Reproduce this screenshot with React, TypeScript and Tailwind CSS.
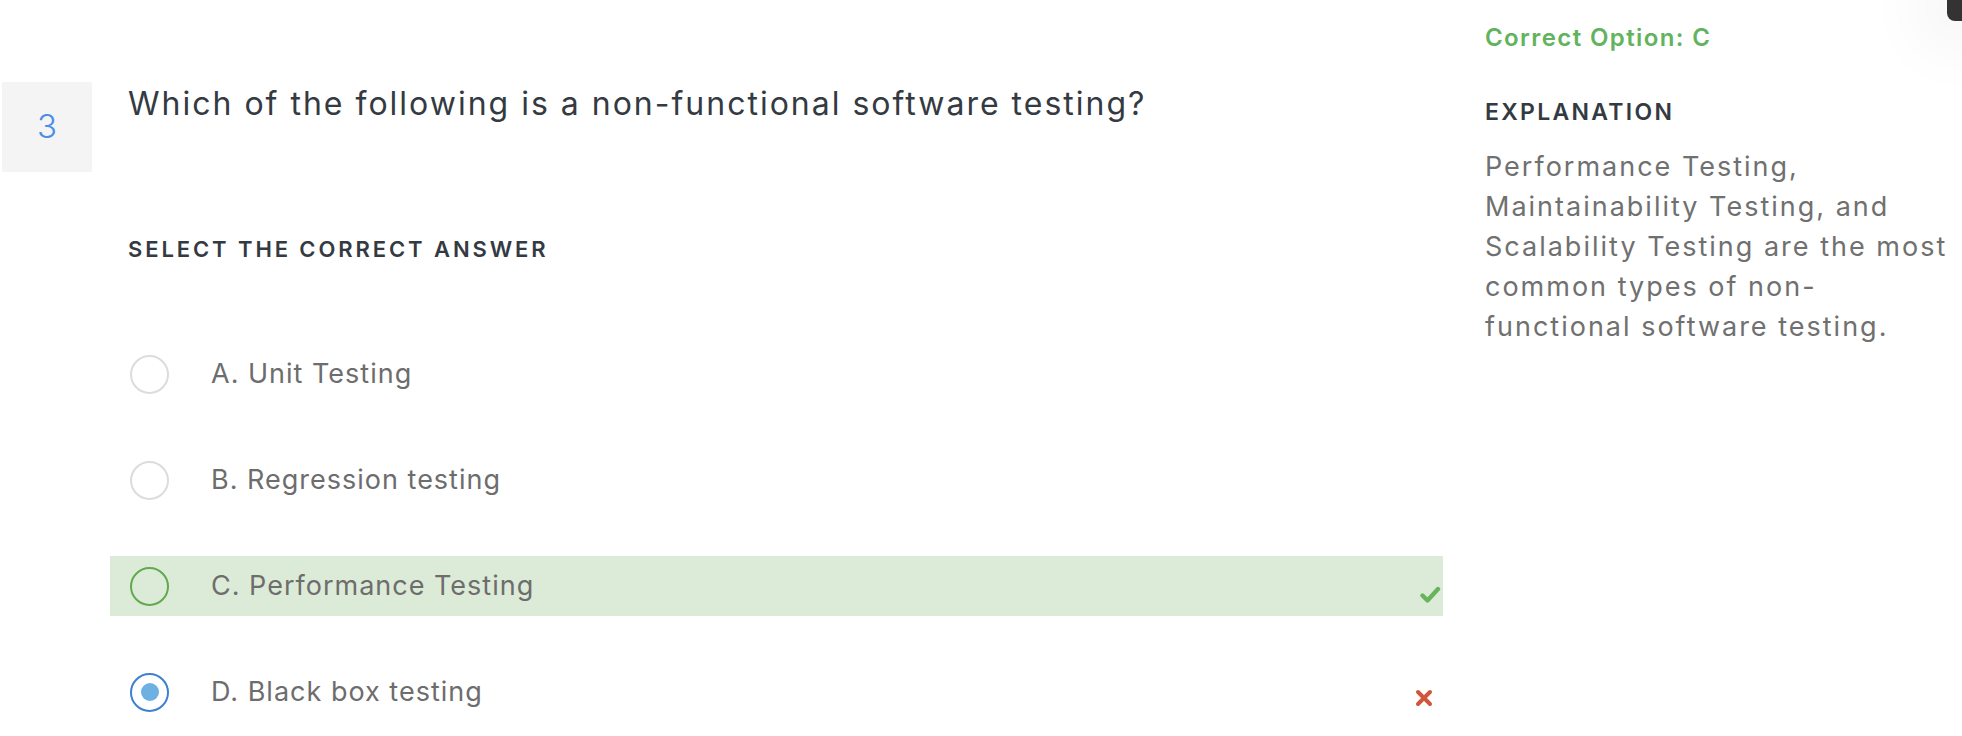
import React from 'react';

const options = [
  { key: 'A', label: 'Unit Testing', state: 'idle' },
  { key: 'B', label: 'Regression testing', state: 'idle' },
  { key: 'C', label: 'Performance Testing', state: 'correct' },
  { key: 'D', label: 'Black box testing', state: 'wrong' },
];

const Check = () => (
  <svg width="21" height="18" viewBox="0 0 21 18" fill="none">
    <path d="M2.5 9.5 L7.5 14.5 L18 3" stroke="#6ab35e" strokeWidth="4.4" strokeLinecap="round" strokeLinejoin="round" />
  </svg>
);

const Cross = () => (
  <svg width="18" height="18" viewBox="0 0 18 18" fill="none">
    <path d="M3 3 L15 15 M15 3 L3 15" stroke="#d0553b" strokeWidth="4" strokeLinecap="round" />
  </svg>
);

const Radio: React.FC<{ state: string }> = ({ state }) => {
  if (state === 'correct') {
    return <span className="w-[39px] h-[39px] rounded-full border-2 border-[#62a94e] shrink-0" />;
  }
  if (state === 'wrong') {
    return (
      <span className="w-[39px] h-[39px] rounded-full border-2 border-[#3d7fd0] bg-white shrink-0 flex items-center justify-center">
        <span className="w-[18px] h-[18px] rounded-full bg-[#6db1e2]" />
      </span>
    );
  }
  return <span className="w-[39px] h-[39px] rounded-full border-2 border-[#dcdcdc] bg-white shrink-0" />;
};

const App: React.FC = () => {
  return (
    <div
      className="relative w-full h-[736px] bg-white overflow-hidden flex"
      style={{ fontFamily: 'Inter, "Noto Sans", sans-serif' }}
    >
      <div className="flex-1 flex pl-[2px] pt-[82px]">
        <div className="w-[90px] h-[90px] bg-[#f4f4f4] flex items-center justify-center shrink-0">
          <span className="text-[33px] font-light text-[#4a8ee8]">3</span>
        </div>
        <div className="flex-1 flex flex-col">
          <h2 className="ml-[36px] mt-[2px] text-[32px] leading-[40px] text-[#343a42] tracking-[2px] whitespace-nowrap">
            Which of the following is a non-functional software testing?
          </h2>
          <p className="ml-[36px] mt-[112px] text-[22px] font-semibold leading-[26px] text-[#343a42] tracking-[2.9px]">
            SELECT THE CORRECT ANSWER
          </p>
          <div className="mt-[82px] flex flex-col gap-[46px] w-[1333px] ml-[18px]">
            {options.map((o) => (
              <div
                key={o.key}
                className={`h-[60px] flex items-center pl-[20px] pr-[2px] ${o.state === 'correct' ? 'bg-[#dcebd7]' : ''}`}
              >
                <Radio state={o.state} />
                <span className="ml-[42px] flex-1 text-[27px] text-[#6d6d6d] tracking-[1px]">
                  {o.key}. {o.label}
                </span>
                {o.state === 'correct' && <span className="mt-[18px]"><Check /></span>}
                {o.state === 'wrong' && <span className="mt-[12px] mr-[8px]"><Cross /></span>}
              </div>
            ))}
          </div>
        </div>
      </div>
      <aside className="w-[477px] shrink-0 pt-[22px]">
        <p className="text-[24px] font-semibold text-[#62b35e] leading-[32px] tracking-[1.4px]">Correct Option: C</p>
        <p className="mt-[44px] text-[23px] font-semibold text-[#343a42] leading-[28px] tracking-[2.3px]">EXPLANATION</p>
        <p className="mt-[21px] w-[468px] text-[27px] leading-[40px] text-[#707070] tracking-[2px]">
          Performance Testing, Maintainability Testing, and Scalability Testing are the most common types of non-functional software testing.
        </p>
      </aside>
      <div className="absolute top-0 right-0 w-[15px] h-[21px] bg-[#333333] rounded-bl-[8px] shadow-[0_0_60px_30px_rgba(0,0,0,0.04)]" />
    </div>
  );
};

export default App;
